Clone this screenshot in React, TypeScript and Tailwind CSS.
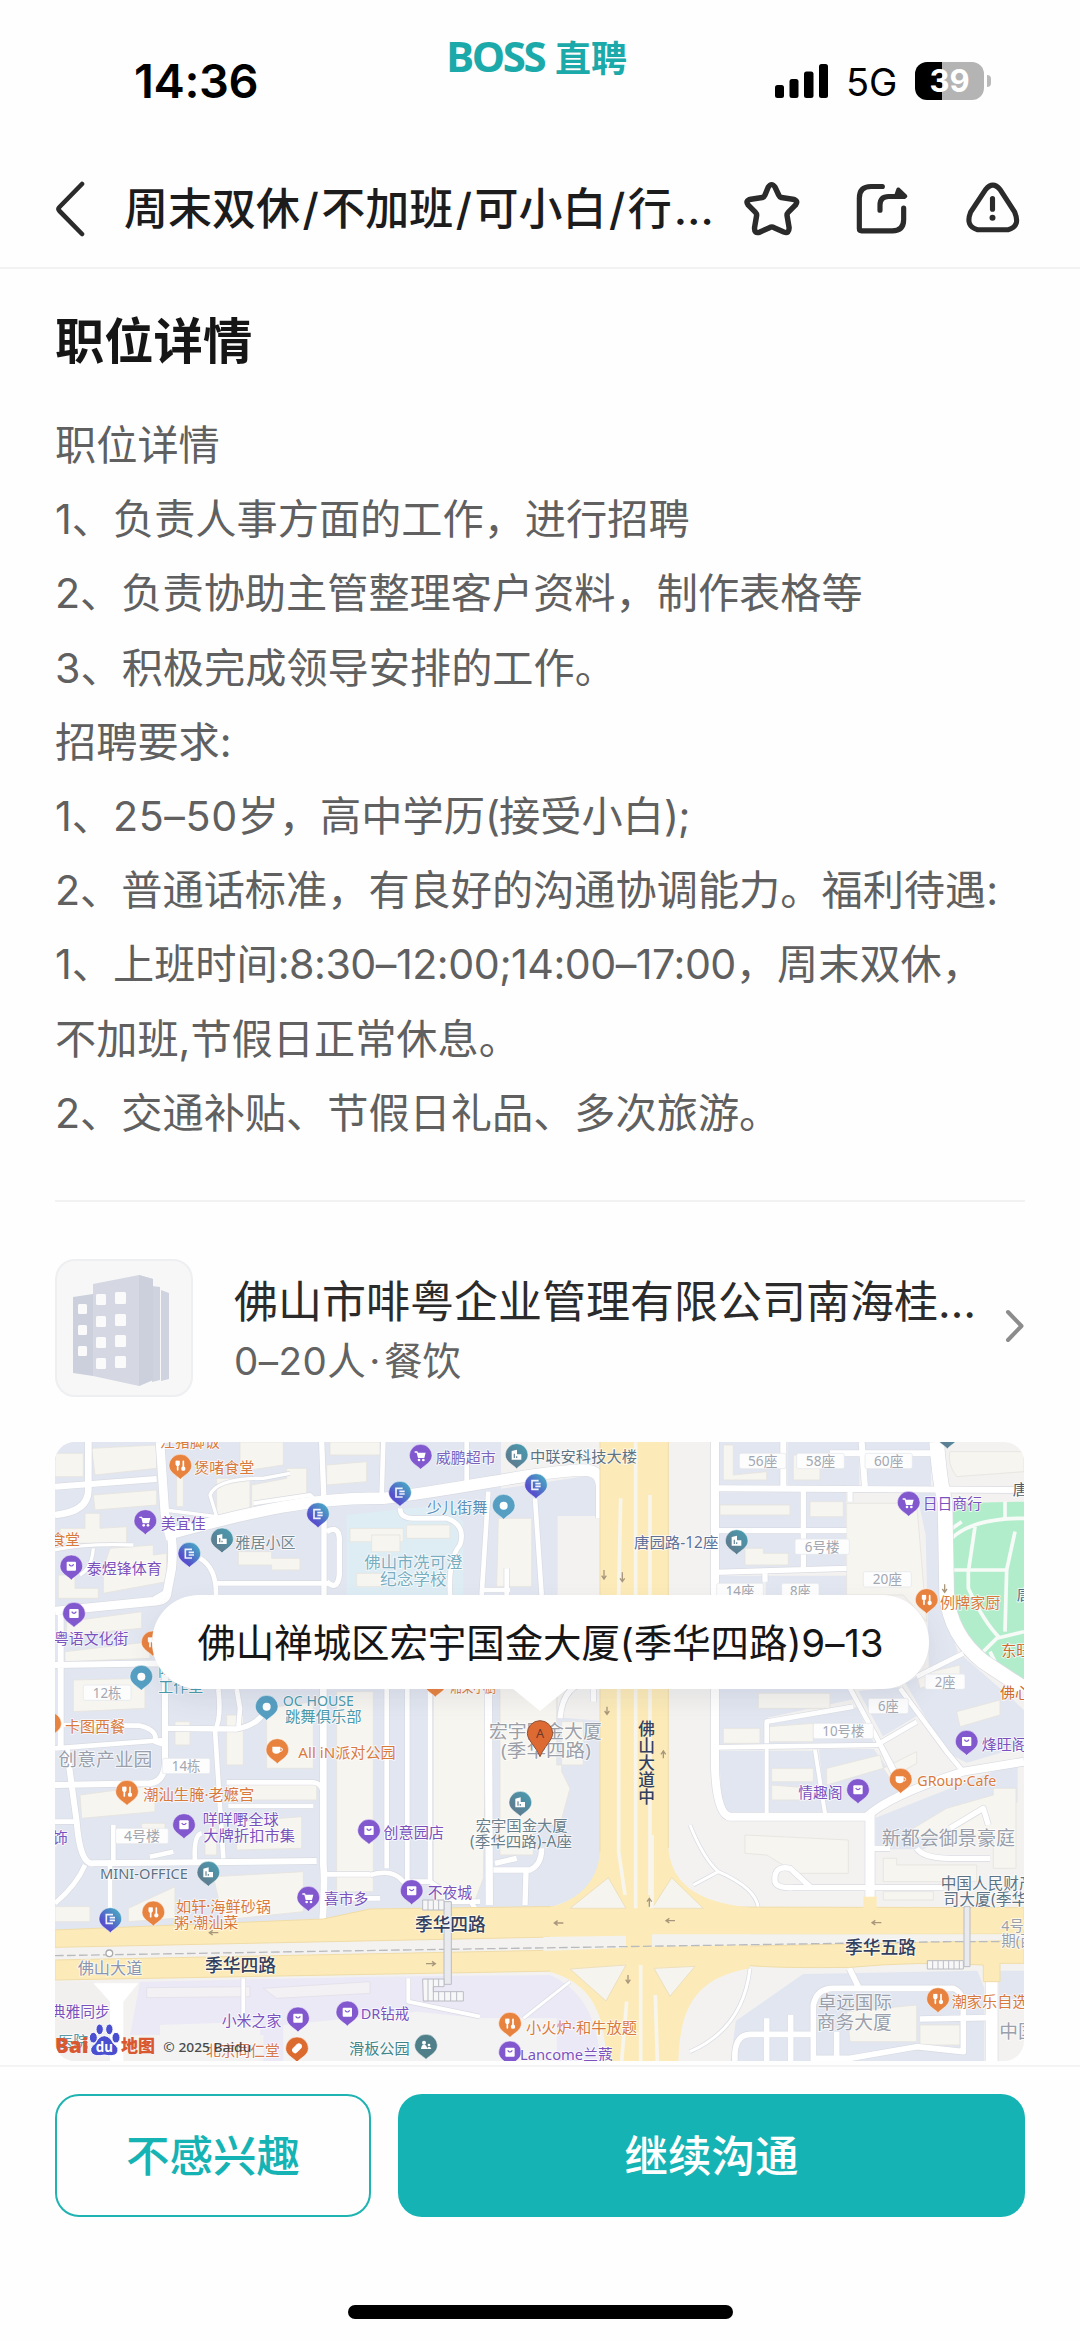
import React from "react";

type PinKind = "fork" | "cart" | "bag" | "bus" | "dot" | "building" | "cup" | "pill" | "people";

const PIN_FILL: Record<PinKind, string> = {
  fork: "#e8823f",
  cup: "#e8823f",
  cart: "#8258cf",
  bag: "#8258cf",
  bus: "url(#busPin)",
  dot: "#569fc2",
  building: "url(#buildingPin)",
  pill: "#dc6b30",
  people: "#4f7f88",
};

// kind, centre x, centre y
const PINS: [PinKind, number, number][] = [
  ["fork", 391, 92],
  ["cart", 286, 258],
  ["building", 516, 313],
  ["bus", 804, 237],
  ["bus", 418, 356],
  ["bus", 1050, 173],
  ["bus", 1458, 150],
  ["bus", 181, 1452],
  ["bag", 64, 394],
  ["bag", 72, 536],
  ["fork", 308, 622],
  ["dot", 274, 725],
  ["dot", 650, 815],
  ["fork", 0, 866],
  ["cup", 682, 945],
  ["cart", 1112, 62],
  ["building", 1400, 60],
  ["dot", 1361, 212],
  ["building", 2060, 318],
  ["fork", 1156, 745],
  ["cart", 2576, 203],
  ["building", 2692, 0],
  ["fork", 2630, 495],
  ["bag", 2750, 920],
  ["fork", 231, 1070],
  ["bag", 402, 1170],
  ["building", 475, 1313],
  ["bag", 957, 1187],
  ["cart", 775, 1388],
  ["fork", 310, 1432],
  ["bag", 744, 1750],
  ["bag", 892, 1732],
  ["pill", 741, 1840],
  ["people", 1128, 1832],
  ["building", 1411, 1103],
  ["bag", 1085, 1368],
  ["fork", 1380, 1766],
  ["bag", 1380, 1852],
  ["bag", 2424, 1065],
  ["cup", 2552, 1034],
  ["fork", 2664, 1692],
];

const O = "#d97a3d";
const P = "#7a52bd";
const G = "#9aa0ab";
const S = "#5d7282";
const T = "#4b9aac";
const N = "#33405f";

// text, x, baseline, width, size, colour, weight
const LABELS: [string, number, number, number, number, string, number][] = [
  ["汪猪脚饭", 330, 37, 180, 45, O, 400],
  ["煲啫食堂", 433, 113, 180, 45, O, 400],
  ["美宜佳", 332, 282, 135, 45, P, 400],
  ["雅居小区", 556, 338, 181, 45, "#72878f", 400],
  ["食堂", 2, 330, 88, 45, O, 400],
  ["泰煜锋体育", 110, 416, 225, 45, P, 400],
  ["粤语文化街", 12, 626, 223, 45, P, 400],
  ["陶艺", 325, 722, 90, 45, T, 400],
  ["工作室", 325, 771, 135, 45, T, 400],
  ["OC HOUSE", 698, 812, 214, 45, T, 400],
  ["跳舞俱乐部", 705, 862, 230, 45, T, 400],
  ["卡图西餐", 45, 891, 180, 45, O, 400],
  ["创意产业园", 25, 992, 282, 56, G, 400],
  ["佛山市冼可澄", 943, 399, 294, 48, "#79adc0", 400],
  ["纪念学校", 990, 451, 200, 48, "#79adc0", 400],
  ["All iN派对公园", 745, 970, 292, 45, O, 400],
  ["威鹏超市", 1157, 85, 180, 45, "#7a64bd", 400],
  ["中联安科技大楼", 1440, 82, 321, 46, S, 400],
  ["少儿街舞", 1130, 235, 182, 45, "#5b8fb8", 400],
  ["唐园路-12座", 1752, 340, 253, 46, "#5f7199", 400],
  ["湘菜小厨", 1200, 772, 140, 45, O, 400],
  ["宏宇国金大厦", 1317, 910, 338, 56, "#9ba0a8", 400],
  ["(季华四路)", 1353, 966, 270, 54, "#9ba0a8", 400],
  ["日日商行", 2618, 222, 178, 45, P, 400],
  ["唐", 2888, 180, 46, 45, "#555b66", 400],
  ["唐", 2900, 495, 46, 45, "#4f6b85", 400],
  ["例牌家厨", 2670, 520, 181, 45, O, 400],
  ["东旺", 2854, 663, 90, 45, "#cf6b2f", 400],
  ["佛心", 2850, 790, 90, 45, "#cf6b2f", 400],
  ["烽旺阁", 2795, 945, 135, 45, P, 400],
  ["潮汕生腌·老嬷宫", 280, 1094, 333, 45, O, 400],
  ["咩咩嘢全球", 458, 1170, 228, 46, P, 400],
  ["大牌折扣市集", 460, 1218, 275, 46, P, 400],
  ["饰", 8, 1223, 45, 45, P, 400],
  ["MINI-OFFICE", 150, 1332, 264, 45, S, 400],
  ["创意园店", 1000, 1209, 182, 45, P, 400],
  ["喜市多", 822, 1408, 133, 45, P, 400],
  ["如轩·海鲜砂锅", 378, 1430, 285, 46, O, 400],
  ["粥·潮汕菜", 372, 1478, 193, 46, O, 400],
  ["佛山大道", 83, 1617, 194, 49, "#8a95b3", 400],
  ["季华四路", 465, 1612, 213, 54, N, 500],
  ["典雅同步", 2, 1745, 177, 45, P, 400],
  ["小米之家", 515, 1772, 179, 45, P, 400],
  ["DR钻戒", 932, 1752, 146, 45, P, 400],
  ["医院", 25, 1835, 90, 45, "#5a97a8", 400],
  ["北京同仁堂", 468, 1862, 221, 45, "#d57a4d", 400],
  ["滑板公园", 897, 1857, 182, 45, "#3f8589", 400],
  ["宏宇国金大厦", 1277, 1189, 276, 46, "#6b7f8b", 400],
  ["(季华四路)-A座", 1260, 1235, 306, 46, "#6b7f8b", 400],
  ["不夜城", 1133, 1390, 133, 45, P, 400],
  ["季华四路", 1095, 1488, 212, 54, N, 500],
  ["小火炉·和牛放题", 1428, 1793, 333, 45, O, 400],
  ["Lancome兰蔻", 1410, 1875, 278, 45, P, 400],
  ["情趣阁", 2245, 1088, 133, 45, P, 400],
  ["GRoup·Cafe", 2602, 1053, 237, 45, O, 400],
  ["新都会御景豪庭", 2495, 1230, 400, 57, G, 400],
  ["中国人民财产", 2672, 1362, 282, 47, S, 400],
  ["司大厦(季华五", 2680, 1410, 300, 47, S, 400],
  ["4号楼", 2854, 1487, 110, 44, G, 400],
  ["期(西", 2854, 1532, 100, 44, G, 400],
  ["季华五路", 2385, 1558, 213, 54, N, 500],
  ["卓远国际", 2303, 1722, 223, 56, G, 400],
  ["商务大厦", 2300, 1781, 225, 56, G, 400],
  ["潮家乐自选", 2705, 1717, 228, 45, O, 400],
  ["中国", 2848, 1808, 112, 56, G, 400],
];

// text, box x, box y, box width, text width
const TAGS: [string, number, number, number, number][] = [
  ["12栋", 100, 750, 143, 86],
  ["56座", 2068, 55, 140, 88],
  ["58座", 2240, 55, 143, 88],
  ["60座", 2445, 55, 142, 88],
  ["6号楼", 2235, 312, 163, 104],
  ["20座", 2440, 410, 144, 88],
  ["14座", 2000, 445, 140, 86],
  ["8座", 2195, 445, 112, 62],
  ["2座", 2625, 717, 120, 62],
  ["6座", 2455, 790, 120, 62],
  ["10号楼", 2290, 865, 180, 126],
  ["14栋", 337, 970, 143, 86],
  ["4号楼", 197, 1180, 158, 108],
];

const BLUE_AREAS = [
  "M15 21H1350V165L1650 120V240H1520V850L1650 860V1250C1640 1350 1570 1405 1480 1415L1330 1425L960 1425L820 1450L15 1485Z",
  "M2005 21H2190V150H2005Z M2215 21H2425V150H2215Z M2448 21H2640V150H2448Z",
  "M2005 175H2250V280H2005Z M2272 175H2385V280H2272Z M2010 295H2250V400H2010Z M2272 295H2385V400H2272Z",
  "M2010 425H2135V900H2010Z M2150 425H2390V480H2150Z M2600 160L2650 160L2690 560L2720 650L2640 720L2630 300Z",
  "M2003 760H2400L2410 790L2150 845V925H2003Z M2160 870L2420 820L2470 925H2140Z",
  "M2010 950H2140V1140H2020Z M2160 950H2290L2320 1135H2160Z M2310 945H2470L2560 1070L2470 1135H2330Z",
  "M2430 770L2550 760L2600 840L2500 900Z M2570 745L2730 660L2880 790L2922 830V930L2750 980L2690 950Z",
  "M2480 1150L2900 985V1100H2820L2620 1240L2480 1240Z",
  "M2260 1620L2780 1610L2800 1660V1878H2045L2060 1760Z M2850 1610H2922V1690H2850Z",
];

const BUILDINGS = [
  "M125 40L320 30V100L135 120Z",
  "M15 55H100V125H15Z",
  "M130 180L320 165V210L135 225Z",
  "M105 235H150V280L230 275V325H30V280H105Z",
  "M380 60H400V215H380Z",
  "M500 130H600V230L500 265Z",
  "M570 21H700V90L570 110Z",
  "M605 150L710 130V100H770V180L605 220Z",
  "M830 90L950 80V140L830 150Z",
  "M840 21H990V60H840Z",
  "M565 350H665V370H750V405H665V390H565Z",
  "M180 340L310 330V360L350 355V440L160 475V400Z",
  "M25 420H75V460H145V490H25Z",
  "M50 560L275 530V580L50 600Z",
  "M45 650L300 620V670L45 680Z",
  "M70 735L285 730V820L70 830Z",
  "M900 280H1060V320H900Z M920 415H1000V455H920Z",
  "M1070 270H1200V310H1070Z M965 300H1050V350H965Z",
  "M1345 250H1445V455H1340Z",
  "M1150 760H1310L1300 1330L1270 1410H1150Z",
  "M1350 760H1520V990H1600V860H1535V1010L1560 1060L1530 1170H1450V1260H1350Z",
  "M860 770H970V1370H860Z",
  "M650 820L790 800V1000H650Z M530 840H580V990H530Z",
  "M535 1045H800V1095H540Z M560 1160L755 1145V1240L560 1245Z",
  "M480 1180H500V1260H465V1200Z M90 1080L315 1050V1130L95 1150Z",
  "M15 1415H120V1460H15Z M235 1420L375 1355V1450L235 1460Z",
  "M490 1325L760 1310V1430L520 1455Z",
  "M375 860H420V930H375Z M275 1165H345V1210H275Z",
  "M2020 30H2050V120L2150 110V135H2020Z M2230 60H2310V135H2230Z",
  "M2010 210H2220V240H2010Z M2280 200H2380V245H2280Z",
  "M2085 340H2140V355H2215V390H2085Z",
  "M2390 205H2600L2630 560L2560 480H2390Z",
  "M2125 775H2340V820H2125Z M2020 880H2130V925H2020Z M2155 875L2290 865V920H2155Z",
  "M2700 50H2922V110L2720 125Q2690 85 2700 50Z",
  "M2720 830L2850 795V840L2730 875Z M2600 720L2730 690V720L2610 760Z",
  "M2165 1000H2290V1040H2165Z M2165 1050L2290 1060V1095H2165Z M2330 1000L2490 960L2500 1000L2330 1050Z",
  "M2500 1000L2600 950V985L2520 1030Z M2540 1210L2690 1120L2830 1080V1060H2898V1300H2830V1200Z",
  "M2085 1200L2395 1215V1315H2240L2150 1260L2085 1255Z M2500 1270H2540V1290H2780V1340H2500Z M2500 1370H2650V1395H2500Z",
  "M2390 1730L2600 1710V1820H2400Z M2610 1770H2730V1830H2610Z",
];

// path, width
const ROADS: [string, number][] = [
  ["M15 155L320 132", 18],
  ["M115 21V160Q118 230 15 240", 20],
  ["M330 21L345 240Q375 300 365 400L350 480Q345 500 300 500L15 528", 26],
  ["M345 300C600 230 800 185 1000 190C1250 160 1450 110 1600 105Q1655 105 1655 160V250", 34],
  ["M345 225L500 245L480 180Q500 130 640 130L720 115", 10],
  ["M610 205L780 180L810 210", 12],
  ["M815 21L822 200V480M830 290Q865 270 868 310V420Q862 470 830 440", 16],
  ["M450 370Q500 400 498 480M500 445H840", 14],
  ["M15 345Q100 325 250 330M130 340Q125 400 90 420M310 490L345 470", 10],
  ["M15 690L345 685M32 540V940M345 560V1000", 18],
  ["M40 870L270 872Q325 885 315 920L345 930", 14],
  ["M15 940L345 915", 14],
  ["M345 880L560 882Q620 870 640 835", 16],
  ["M505 762Q515 850 495 885L520 1270M560 762L570 820L565 880", 14],
  ["M820 760V1290Q825 1330 818 1455", 20],
  ["M15 1050L300 1045Q350 1040 345 960M50 940L80 1160Q90 1290 130 1285L800 1278", 18],
  ["M15 1160H80M190 1170V1290M180 1290V1440M105 1290Q80 1350 15 1405M300 1265L370 1250M435 1280Q430 1200 455 1195", 14],
  ["M530 1042H790Q815 1045 818 1070M535 1113H790M830 1318H960M900 1390H990", 14],
  ["M1010 760V1300M1072 760V1350M1140 760V1340M960 1320Q1030 1300 1060 1340H1140L1170 1360M1200 1400H1290M1250 1380L1275 1420", 14],
  ["M1315 760L1318 1410", 22],
  ["M1335 1285L1400 1270M1330 1305H1440Q1475 1290 1475 1240M1428 1310L1425 1410M1530 850Q1540 740 1630 740V800", 16],
  ["M1000 21L995 180M1250 21V150M1050 220Q1050 250 1090 250H1190Q1250 270 1230 330Q1195 370 1200 480", 14],
  ["M1315 170L1295 480M1455 190L1475 480M1370 480V400M1300 465H1380", 14],
  ["M1995 21V1000Q2000 1140 2040 1145H2450Q2520 1080 2740 1010L2922 980", 24],
  ["M1995 160L2922 165M2200 21V160M2435 21L2445 160M2340 55H2660", 18],
  ["M2260 165V400M2400 165V200M1995 287H2390M1995 412L2390 400M2145 412V440", 16],
  ["M2660 21Q2670 150 2685 200L2690 480Q2700 600 2800 680L2922 760", 44],
  ["M2740 655L2600 725M2400 760L2530 1000L2560 1070M2550 760L2690 950L2740 1010", 14],
  ["M2150 925V860L2410 815M1995 937L2480 930L2600 860", 14],
  ["M2150 940V1140M2295 945L2325 1135M2490 930L2560 1080", 12],
  ["M2460 1140V1390", 28],
  ["M2280 1355L2220 1300Q2170 1290 2175 1340Q2180 1360 2230 1358H2680M2460 1240H2520M2600 1240Q2620 1270 2700 1270H2820M2700 1180L2800 1120L2815 1170", 16],
  ["M2055 1878Q2050 1800 2100 1798H2290M2150 1750V1878M2222 1740V1878M2290 1878V1710Q2300 1660 2350 1660H2710Q2740 1670 2740 1720V1850L2600 1835L2400 1870H2290M2360 1790V1870M2610 1752L2810 1748M2425 1655L2398 1600", 17],
  ["M2825 1640V1878", 36],
  ["M1920 1170Q1960 1270 2005 1310Q2120 1360 2125 1420M2005 1310L1930 1350M2100 1600Q2080 1780 1920 1850M1420 1750L1560 1640", 9],
  ["M1075 1630V1700L1290 1745M580 1630V1780", 12],
];

const POI_GLYPH: Record<PinKind, React.ReactNode> = {
  fork: (
    <g stroke="#fff" strokeWidth="5" fill="none" strokeLinecap="round">
      <path d="M-12-13V-4Q-8 3-4-4V-13M-8-13V13M9-13V4" />
      <circle cx="9" cy="9" r="4" fill="#fff" />
    </g>
  ),
  cup: (
    <g fill="#fff">
      <path d="M-15-10H9V2Q8 11-3 11Q-14 11-15 2Z" />
      <path d="M9-6Q17-6 15 0T8 4" fill="none" stroke="#fff" strokeWidth="3" />
    </g>
  ),
  cart: (
    <g fill="#fff">
      <path d="M-18-13H-10L-8-9H15L11 7H-8L-12-9H-18Z" />
      <circle cx="-5" cy="13" r="4" />
      <circle cx="8" cy="13" r="4" />
    </g>
  ),
  bag: (
    <g>
      <rect x="-14" y="-14" width="28" height="27" rx="3" fill="#fff" />
      <path d="M-7-6Q0 4 7-6" fill="none" stroke="#8258cf" strokeWidth="3.5" />
    </g>
  ),
  bus: (
    <path d="M8-13H-12V13H8M-2-4H14M-2 4H14" fill="none" stroke="#fff" strokeWidth="5" opacity=".9" />
  ),
  dot: <circle r="12" fill="#fff" />,
  building: (
    <g>
      <path d="M-15 14V-12L1-16V-2H14V14Z" fill="#fff" />
      <path d="M-7-4V9M0 4V9" stroke="#7291a2" strokeWidth="4" />
    </g>
  ),
  pill: <rect x="-17" y="-9" width="34" height="18" rx="9" transform="rotate(-45)" fill="#fff" />,
  people: (
    <g fill="#fff">
      <circle cx="-6" cy="-9" r="6" />
      <path d="M-15 10Q-14-3-6-3T4 10Z" />
      <circle cx="9" cy="-2" r="4" />
      <path d="M3 10Q4 3 9 3T16 10Z" />
    </g>
  ),
};

function Pin({ kind, x, y }: { kind: PinKind; x: number; y: number }) {
  return (
    <g transform={`translate(${x} ${y})`}>
      <path
        d="M-34 0A34 34 0 1 1 34 0C34 20 12 28 0 41C-12 28-34 20-34 0Z"
        fill={PIN_FILL[kind]}
        stroke="#fff"
        strokeOpacity=".5"
        strokeWidth="3"
      />
      {POI_GLYPH[kind]}
    </g>
  );
}

function MapDrawing() {
  return (
    <svg viewBox="15 21 2907 1857" className="block h-full w-full" preserveAspectRatio="none">
      <defs>
        <linearGradient id="busPin" x1="0" y1="1" x2="1" y2="0">
          <stop offset="0.3" stopColor="#5650cc" />
          <stop offset="0.8" stopColor="#4a9dc4" />
        </linearGradient>
        <linearGradient id="buildingPin" x1="0" y1="1" x2="1" y2="0">
          <stop offset="0.3" stopColor="#5c7f92" />
          <stop offset="1" stopColor="#459fb5" />
        </linearGradient>
      </defs>
      <rect x="0" y="0" width="2940" height="1900" fill="#f3f2f0" />
      {BLUE_AREAS.map((d) => (
        <path key={d} d={d} fill="#e1e6f0" stroke="#e1e6f0" strokeWidth="6" strokeLinejoin="round" />
      ))}
      <path d="M890 240L1180 210L1240 260V480H890Z" fill="#deedf4" />
      <path d="M270 1640L960 1625L1500 1620Q1640 1680 1650 1878H640V1800H240Z" fill="#ece9f7" />
      <path d="M330 1770L630 1760V1878H330Z M700 1770L1100 1730L1290 1750L1520 1750V1878H700Z" fill="#f3f3f3" />
      <path d="M15 1640H130L190 1700V1878H15Z" fill="#f1f0ee" />
      <path d="M290 1658L600 1655V1685L290 1688Z M640 1660L960 1640V1675L680 1690Z" fill="#f3f1f4" stroke="#dfdce6" strokeWidth="2" />
      {BUILDINGS.map((d) => (
        <path key={d} d={d} fill="#f7f5f0" stroke="#e6e3df" strokeWidth="2.5" />
      ))}

      <path d="M2700 205L2922 200V762L2850 700Q2720 610 2700 510Z" fill="#b2edcb" />
      <path
        d="M2700 315Q2760 250 2922 250M2865 200V255M2775 275L2755 410V460Q2800 560 2850 610M2700 405H2870L2895 290M2870 405L2865 590M2800 650L2840 610L2922 590M2700 285L2735 260M2820 650L2850 710"
        fill="none"
        stroke="#f7fbf8"
        strokeWidth="11"
      />

      {ROADS.map(([d, w]) => (
        <path key={d} d={d} fill="none" stroke="#d9dbe2" strokeWidth={w + 4} strokeLinejoin="round" />
      ))}
      {ROADS.map(([d, w]) => (
        <path key={d} d={d} fill="none" stroke="#fff" strokeWidth={w} strokeLinejoin="round" />
      ))}
      <path d="M130 1645H265L220 1700V1878H180V1700Z" fill="#fff" />

      {/* Main roads */}
      <path
        d="M15 1485L820 1452L960 1422L1480 1415L2922 1418V1497L1800 1500L15 1537Z M15 1575L1800 1540L2922 1515V1585H2850V1640H2800V1590Q2600 1578 2400 1597Q2200 1600 2100 1592L1520 1608L15 1635Z"
        fill="#fcebb8"
        stroke="#f0dca8"
        strokeWidth="3"
      />
      <path
        d="M1650 21H1855V1240C1865 1340 1930 1400 2100 1418V1600C1920 1630 1890 1740 1885 1878H1668C1665 1700 1600 1640 1500 1610L1500 1415C1580 1400 1645 1340 1650 1250Z"
        fill="#fcebb8"
      />
      <path d="M2440 1385H2480V1430H2440Z" fill="#fcebb8" />
      <path
        d="M1675 1328L1728 1420H1560Z M1865 1328L1960 1420H1806Z M1560 1602L1728 1590L1668 1698Z M1812 1600L1935 1594L1860 1684Z"
        fill="#f5f4ef"
        stroke="#eee0bd"
        strokeWidth="3"
      />
      <path d="M1480 1506L1728 1502V1538L1480 1548Z M1806 1498H2922V1515L1806 1535Z" fill="#f3f2ef" />
      <path
        d="M1757 21V130M1712 190L1706 480V1250L1725 1380M1757 130V1420M1800 180V1380M1806 1200V1420M1730 1700L1715 1878M1772 1590V1878M1816 1680L1822 1878"
        fill="none"
        stroke="#f8f5ec"
        strokeWidth="11"
      />
      <path
        d="M1650 21V1250M1855 21V1240"
        fill="none"
        stroke="#eedcae"
        strokeWidth="3"
      />
      <path d="M15 1562L990 1546L2700 1520L2860 1520" fill="none" stroke="#b9babd" strokeWidth="4" strokeDasharray="26 10" />
      <circle cx="178" cy="1555" r="10" fill="#fff" stroke="#aaa" strokeWidth="4" />

      {/* Footbridges and stairs */}
      <g fill="#e9eaee" stroke="#b9bcc4" strokeWidth="3">
        <path d="M1182 1400H1204V1648H1182Z" />
        <path d="M2742 1415H2760V1595H2742Z" />
        <path d="M1118 1395H1182V1425H1118Z M1118 1632H1182V1655H1150V1670H1240V1698H1120Z M2632 1577H2740V1602H2632Z" fill="#f7f7f7" />
        <path d="M1134 1395V1425M1150 1395V1425M1166 1395V1425M1134 1632V1698M1150 1632V1698M1166 1632V1655M1166 1670V1698M1184 1670V1698M1202 1670V1698M1220 1670V1698M2648 1577V1602M2664 1577V1602M2680 1577V1602M2696 1577V1602M2712 1577V1602M2728 1577V1602" />
      </g>

      {/* Traffic direction arrows */}
      <g fill="none" stroke="#a8977c" strokeWidth="4">
        <path d="M1662 405V430M1655 422L1662 432L1669 422M1717 412V438M1710 430L1717 440L1724 430M1671 815V838M1664 828L1671 838L1678 828" />
        <path d="M1840 970V950M1833 958L1840 948L1847 958M1798 1415V1392M1791 1400L1798 1390L1805 1400M1734 1620V1642M1727 1634L1734 1644L1741 1634M2684 448V470M2677 462L2684 472L2691 462" />
        <path d="M1540 1464H1515M1523 1457L1513 1464L1523 1471M1875 1457H1850M1858 1450L1848 1457L1858 1464M2494 1463H2468M2476 1456L2466 1463L2476 1470M505 1493H480M488 1486L478 1493L488 1500M1128 1586H1155M1146 1579L1156 1586L1146 1593" />
      </g>

      {TAGS.map(([t, x, y, w, tw]) => (
        <g key={t + x}>
          <rect x={x} y={y} width={w} height="46" rx="6" fill="#fdfdfe" stroke="#e3e5ea" strokeWidth="2" />
          <text
            x={x + w / 2}
            y={y + 38}
            textAnchor="middle"
            fontSize="42"
            fill="#a3a7b0"
            textLength={tw}
            lengthAdjust="spacingAndGlyphs"
          >
            {t}
          </text>
        </g>
      ))}

      {PINS.map(([k, x, y]) => (
        <Pin key={k + x + "-" + y} kind={k} x={x} y={y} />
      ))}

      {LABELS.map(([t, x, y, w, s, c, wt]) => (
        <text
          key={t + x + "-" + y}
          x={x}
          y={y}
          fontSize={s}
          fill={c}
          fontWeight={wt}
          stroke="#fff"
          strokeOpacity=".75"
          strokeWidth="5"
          paintOrder="stroke"
          textLength={w}
          lengthAdjust="spacingAndGlyphs"
        >
          {t}
        </text>
      ))}

      {["佛", "山", "大", "道", "中"].map((c, i) => (
        <text key={c} x="1790" y={900 + i * 51} textAnchor="middle" fontSize="50" fontWeight="500" fill={N}>
          {c}
        </text>
      ))}

      {/* Marker A */}
      <g transform="translate(1470 895)">
        <path d="M-38 0A38 38 0 1 1 38 0C38 20 12 40 0 70C-12 40-38 20-38 0Z" fill="#dd6a32" stroke="#8f5238" strokeWidth="3" />
        <text y="14" textAnchor="middle" fontSize="38" fill="#6b3a2a">A</text>
      </g>

      {/* Map provider mark */}
      <g>
        <text x="14" y="1854" fontSize="62" fontWeight="900" fill="#d9582f" textLength="102" lengthAdjust="spacingAndGlyphs">Bai</text>
        <g fill="#4a4fd0" stroke="#fff" strokeWidth="3">
          <path d="M163 1802Q180 1803 190 1825Q212 1840 200 1856Q190 1866 163 1860Q136 1866 126 1856Q114 1840 136 1825Q146 1803 163 1802Z" />
          <ellipse cx="130" cy="1808" rx="12" ry="16" />
          <ellipse cx="149" cy="1783" rx="11" ry="16" />
          <ellipse cx="178" cy="1783" rx="11" ry="16" />
          <ellipse cx="198" cy="1808" rx="12" ry="16" />
        </g>
        <text x="163" y="1852" textAnchor="middle" fontSize="40" fontWeight="700" fill="#fff">du</text>
        <text x="213" y="1852" fontSize="52" fontWeight="900" fill="#d9582f" textLength="102" lengthAdjust="spacingAndGlyphs">地图</text>
        <text x="340" y="1850" fontSize="36" fontWeight="500" fill="#4a4a4a" textLength="264" lengthAdjust="spacingAndGlyphs">© 2025 Baidu</text>
      </g>
    </svg>
  );
}

function StatusBar() {
  return (
    <div className="flex h-[120px] shrink-0 items-start">
      <div className="w-[446px] pl-[134px] pt-[53px] text-[47px] font-semibold leading-[56px] tracking-[-0.4px] text-black">
        14:36
      </div>
      <div className="flex w-[329px] items-baseline gap-[10px] pt-[30px] text-[#1ba9a9]">
        <span className="w-[99px] whitespace-nowrap font-['Open_Sans'] text-[42px] font-bold leading-[52px] tracking-[-2.4px]">BOSS</span>
        <span className="text-[36px] font-bold leading-[52px]">直聘</span>
      </div>
      <div className="flex items-center pt-[61px]">
        <svg viewBox="775 61 54 38" className="h-[38px] w-[54px]">
          <rect x="775" y="84" width="9" height="13" rx="2.5" />
          <rect x="789.500" y="78" width="9" height="19" rx="2.500" />
          <rect x="804" y="70.500" width="9.500" height="26.500" rx="2.500" />
          <rect x="819" y="63" width="9" height="34" rx="2.500" />
        </svg>
        <span className="ml-[17px] w-[50px] pt-[2px] text-[38px] leading-[38px] text-black">5G</span>
        <div className="ml-[19px] flex h-[38px] w-[69px] items-center justify-center rounded-[12px] bg-[linear-gradient(90deg,#000_39%,#b4b4b4_39%)] text-[31px] font-bold leading-[38px] text-white">
          39
        </div>
        <div className="ml-[3px] h-[12px] w-[4px] rounded-r-full bg-[#b9b9b9]" />
      </div>
    </div>
  );
}

function NavBar() {
  return (
    <header className="flex h-[149px] shrink-0 items-center border-b-2 border-[#f2f2f2] pt-[30px]">
      <svg viewBox="0 0 32 58" className="ml-[55px] h-[58px] w-[32px]" fill="none" stroke="#2b2b2b" strokeWidth="4.600" strokeLinecap="round" strokeLinejoin="round">
        <path d="M27 4L4.500 27Q2.500 29 4.500 31L27 54" />
      </svg>
      <h1 className="ml-[37px] w-[619px] whitespace-nowrap text-[44px] font-medium leading-[60px] text-[#1c1c1c]">
        周末双休<span className="px-[2.5px]">/</span>不加班<span className="px-[2.5px]">/</span>可小白<span className="px-[2.5px]">/</span>行<span className="pl-[2px] tracking-[1px]">…</span>
      </h1>
      <svg viewBox="55 403 175 170" className="h-[57px] w-[58px] shrink-0" fill="none" stroke="#2b2b2b" strokeWidth="16.500" strokeLinejoin="round">
        <path d="M131 424Q141 408 152 424L163 448Q165 453 171 455L205 460Q224 464 213 478L192 499Q187 504 188 510L194 545Q195 565 178 559L149 546Q142 542 135 546L106 559Q88 565 90 545L96 510Q97 504 92 499L71 478Q60 464 79 460L113 455Q119 453 121 448Z" />
      </svg>
      <svg viewBox="392 403 165 170" className="ml-[54px] h-[57px] w-[55px] shrink-0" fill="none" stroke="#2b2b2b" strokeWidth="15.500" strokeLinecap="round">
        <path d="M474 422H440Q405 422 405 457V548Q405 555 412 555H504Q538 555 538 521V487" />
        <path d="M467 493V478Q467 452 493 452H538" />
        <path d="M522 431L543 451H515Z" fill="#2b2b2b" strokeWidth="12" strokeLinejoin="round" />
      </svg>
      <svg viewBox="717 401 175 170" className="ml-[54px] h-[57px] w-[58px] shrink-0" fill="none" stroke="#2b2b2b" strokeWidth="15.500" strokeLinecap="round" strokeLinejoin="round">
        <path d="M782 429Q804 402 826 429L870 497Q888 540 850 550H758Q720 540 737 497Z" />
        <path d="M803 456V488" />
        <circle cx="803" cy="514" r="9" fill="#2b2b2b" stroke="none" />
      </svg>
    </header>
  );
}

const DETAIL_LINES: React.ReactNode[] = [
  "职位详情",
  "1、负责人事方面的工作，进行招聘",
  "2、负责协助主管整理客户资料，制作表格等",
  "3、积极完成领导安排的工作。",
  "招聘要求:",
  <>
    1、<span className="tracking-[0.6px]">25–50</span>岁，高中学历<span className="tracking-[-0.8px]">(</span>接受小白<span className="tracking-[-0.8px]">);</span>
  </>,
  "2、普通话标准，有良好的沟通协调能力。福利待遇:",
  <>
    1、上班时间<span className="tracking-[-0.5px]">:8:30–12:00;14:00–17:00</span>，周末双休，
  </>,
  "不加班,节假日正常休息。",
  "2、交通补贴、节假日礼品、多次旅游。",
];

function CompanyLogo() {
  return (
    <div className="h-[138px] w-[138px] shrink-0 overflow-hidden rounded-[20px] border-2 border-[#eeeff1] bg-[#f7f7f8]">
      <svg viewBox="57 1261 134 134" className="h-full w-full">
        <path d="M73 1297L93 1294V1376L73 1373Z" fill="#ccd0dc" />
        <path d="M152 1286L160 1287V1380L152 1382Z M161 1290L169 1293V1379L161 1381Z" fill="#cfd3df" />
        <path d="M93 1284L139 1275L153 1279V1380L139 1386L93 1376Z" fill="#d5d8e2" />
        <path d="M139 1275L153 1279V1380L139 1386Z" fill="#ccd0dd" />
        <g fill="#fafafb">
          {[1293, 1315, 1336, 1357].map((y) => (
            <React.Fragment key={y}>
              <rect x="96" y={y + 1} width="10" height="11" rx="1.500" />
              <rect x="115" y={y - 1} width="11" height="12" rx="1.500" />
            </React.Fragment>
          ))}
          <rect x="78" y="1304" width="9" height="10" rx="1.500" />
          <rect x="78" y="1325" width="9" height="10" rx="1.500" />
          <rect x="78" y="1346" width="9" height="10" rx="1.500" />
        </g>
      </svg>
    </div>
  );
}

export default function App() {
  return (
    <div className="flex h-[2341px] w-[1080px] flex-col overflow-hidden bg-[#fefefe] font-[Inter,'Noto_Sans_CJK_SC',sans-serif]">
      <StatusBar />
      <NavBar />
      <main className="flex h-[1796px] shrink-0 flex-col px-[55px]">
        <h2 className="mt-[36px] text-[49.3px] font-bold leading-[72px] text-[#161616]">职位详情</h2>
        <div className="mt-[31px] text-[41.2px] leading-[74.2px] text-[#606060]">
          {DETAIL_LINES.map((line, i) => (
            <p key={i} className="whitespace-nowrap">{line}</p>
          ))}
        </div>
        <hr className="mt-[50px] border-t-2 border-[#f2f2f2]" />
        <section className="mt-[57px] flex h-[138px] items-center">
          <CompanyLogo />
          <div className="ml-[41px] w-[760px] pt-[3px]">
            <div className="whitespace-nowrap text-[44px] leading-[62px] text-[#2b2b2b]">
              佛山市啡粤企业管理有限公司南海桂<span className="tracking-[1px]">…</span>
            </div>
            <div className="whitespace-nowrap text-[38.5px] leading-[56px] text-[#636363]">
              <span className="tracking-[0.5px]">0–20</span>人<span className="px-[3.5px]">·</span>餐饮
            </div>
          </div>
          <svg viewBox="0 0 20 34" className="mb-[5px] ml-[11px] h-[34px] w-[20px]" fill="none" stroke="#8c8c8c" strokeWidth="4" strokeLinecap="round" strokeLinejoin="round">
            <path d="M3 3L16.500 17L3 31" />
          </svg>
        </section>
        <div className="relative mt-[45px] h-[619px] w-[969px] overflow-hidden rounded-[20px] font-['Noto_Sans','Noto_Sans_CJK_SC',sans-serif]">
          <MapDrawing />
          <div className="absolute left-[97px] top-[153px] flex h-[94px] w-[777px] items-center justify-center rounded-full bg-white pt-[3px] font-[Inter,'Noto_Sans_CJK_SC',sans-serif] text-[38.5px] tracking-[-0.1px] text-[#161616] shadow-[0_10px_24px_rgba(90,90,110,0.10)]">
            <span className="whitespace-nowrap">佛山禅城区宏宇国金大厦(季华四路)9–13</span>
          </div>
          <div className="absolute left-[457px] top-[246px] h-[23px] w-[56px] bg-white [clip-path:polygon(0_0,100%_0,50%_100%)]" />
        </div>
      </main>
      <footer className="flex shrink-0 flex-col items-center border-t-2 border-[#f4f4f4] px-[55px]">
        <div className="mt-[27px] flex w-full gap-[27px]">
          <button className="h-[123px] w-[316px] rounded-[24px] border-[2.5px] border-[#1fb3b1] pt-[3px] text-[43.5px] font-medium text-[#15b3b3]">
            不感兴趣
          </button>
          <button className="h-[123px] w-[627px] rounded-[24px] bg-[#15b3b3] pt-[3px] text-[43.5px] font-medium text-white">
            继续沟通
          </button>
        </div>
        <div className="mt-[88px] h-[14px] w-[385px] rounded-full bg-black" />
      </footer>
    </div>
  );
}
